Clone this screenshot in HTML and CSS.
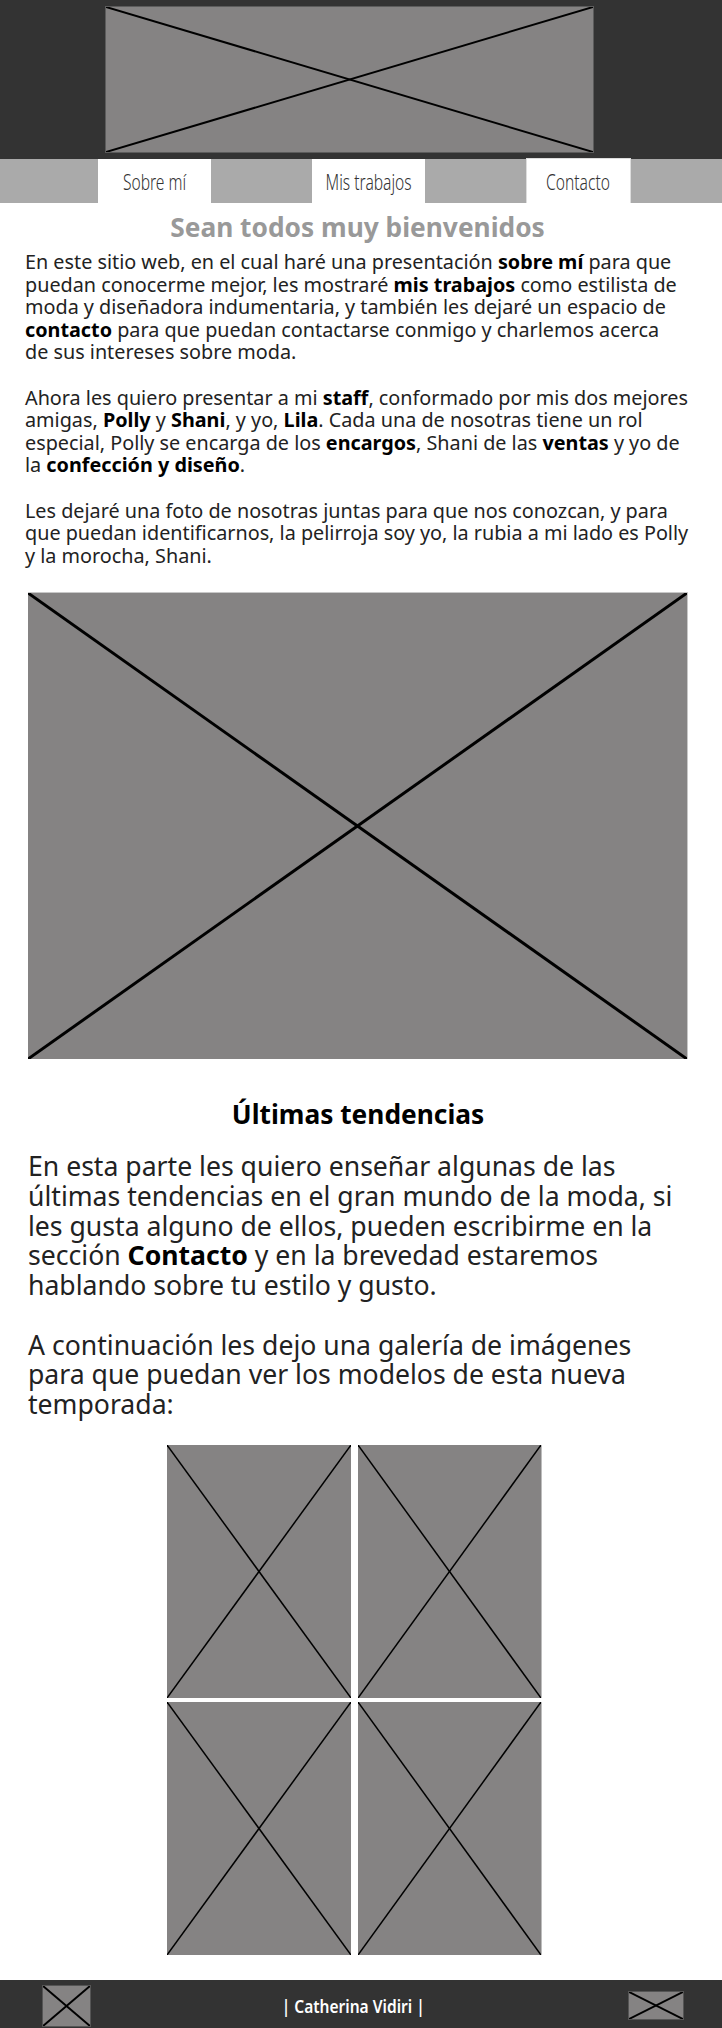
FILE: index.html
```html
<!DOCTYPE html>
<html lang="es">
  <head>
    <meta charset="UTF-8" />
    <meta name="viewport" content="width=device-width, initial-scale=1.0" />
    <title>Catherina Vidiri</title>

    <link rel="stylesheet" href="styles.css">
  </head>
  <body>
    <header class="top">
      <svg class="ph logo" viewBox="0 0 100 100" preserveAspectRatio="none">
        <rect width="100" height="100" />
        <line x1="0" y1="0" x2="100" y2="100" />
        <line x1="100" y1="0" x2="0" y2="100" />
      </svg>
    </header>

    <nav class="menu">
      <a href="#sobre-mi" class="menu-item"><span>Sobre mí</span></a>
      <a href="#trabajos" class="menu-item"><span>Mis trabajos</span></a>
      <a href="#contacto" class="menu-item contacto"><span>Contacto</span></a>
    </nav>

    <section class="intro" id="sobre-mi">
      <h1>Sean todos muy bienvenidos</h1>
      <p class="lead">
        En este sitio web, en el cual haré una presentación <b>sobre mí</b> para que
        puedan conocerme mejor, les mostraré <b>mis trabajos</b> como estilista de
        moda y diseñadora indumentaria, y también les dejaré un espacio de
        <b>contacto</b> para que puedan contactarse conmigo y charlemos acerca
        de sus intereses sobre moda.
      </p>
      <p>
        Ahora les quiero presentar a mi <b>staff</b>, conformado por mis dos mejores
        amigas, <b>Polly</b> y <b>Shani</b>, y yo, <b>Lila</b>. Cada una de nosotras tiene un rol
        especial, Polly se encarga de los <b>encargos</b>, Shani de las <b>ventas</b> y yo de
        la <b>confección y diseño</b>.
      </p>
      <p>
        Les dejaré una foto de nosotras juntas para que nos conozcan, y para
        que puedan identificarnos, la pelirroja soy yo, la rubia a mi lado es Polly
        y la morocha, Shani.
      </p>
    </section>

    <svg class="ph photo" viewBox="0 0 100 100" preserveAspectRatio="none">
      <rect width="100" height="100" />
      <line x1="0" y1="0" x2="100" y2="100" />
      <line x1="100" y1="0" x2="0" y2="100" />
    </svg>

    <section class="trends" id="trabajos">
      <h2>Últimas tendencias</h2>
      <p>
        En esta parte les quiero enseñar algunas de las
        últimas tendencias en el gran mundo de la moda, si
        les gusta alguno de ellos, pueden escribirme en la
        sección <b>Contacto</b> y en la brevedad estaremos
        hablando sobre tu estilo y gusto.
      </p>
      <p>
        A continuación les dejo una galería de imágenes
        para que puedan ver los modelos de esta nueva
        temporada:
      </p>

      <div class="gallery">
        <svg class="ph" viewBox="0 0 100 100" preserveAspectRatio="none">
          <rect width="100" height="100" />
          <line x1="0" y1="0" x2="100" y2="100" />
          <line x1="100" y1="0" x2="0" y2="100" />
        </svg>
        <svg class="ph" viewBox="0 0 100 100" preserveAspectRatio="none">
          <rect width="100" height="100" />
          <line x1="0" y1="0" x2="100" y2="100" />
          <line x1="100" y1="0" x2="0" y2="100" />
        </svg>
        <svg class="ph" viewBox="0 0 100 100" preserveAspectRatio="none">
          <rect width="100" height="100" />
          <line x1="0" y1="0" x2="100" y2="100" />
          <line x1="100" y1="0" x2="0" y2="100" />
        </svg>
        <svg class="ph" viewBox="0 0 100 100" preserveAspectRatio="none">
          <rect width="100" height="100" />
          <line x1="0" y1="0" x2="100" y2="100" />
          <line x1="100" y1="0" x2="0" y2="100" />
        </svg>
      </div>
    </section>

    <footer class="bottom" id="contacto">
      <svg class="ph icon-left" viewBox="0 0 100 100" preserveAspectRatio="none">
        <rect width="100" height="100" />
        <line x1="0" y1="0" x2="100" y2="100" />
        <line x1="100" y1="0" x2="0" y2="100" />
      </svg>
      <span class="firma">| Catherina Vidiri |</span>
      <svg class="ph icon-right" viewBox="0 0 100 100" preserveAspectRatio="none">
        <rect width="100" height="100" />
        <line x1="0" y1="0" x2="100" y2="100" />
        <line x1="100" y1="0" x2="0" y2="100" />
      </svg>
    </footer>
  </body>
</html>
```

FILE: styles.css
```css
body {
  margin: 0;
  padding: 0;
  font-family: "Noto Sans", "Open Sans", sans-serif;
  color: #222;
  background-color: #fff;
}

b {
  color: #000;
}

/* placeholders de imagen */
.ph {
  display: block;
  box-sizing: border-box;
}

.ph rect {
  fill: #858383;
}

.ph line {
  stroke: #000;
  stroke-width: 1.5;
  vector-effect: non-scaling-stroke;
}

.top {
  background-color: #333;
  height: 159px;
  padding-top: 6px;
  box-sizing: border-box;
}

.logo {
  width: 489px;
  height: 147px;
  margin-left: 105px;
  border: 1px solid #5c5c5c;
}

.logo line {
  stroke-width: 2;
}

.menu {
  background-color: #aaa;
  height: 44px;
  display: flex;
  gap: 101px;
  padding-left: 98px;
}

.menu-item {
  width: 113px;
  display: flex;
  align-items: center;
  justify-content: center;
  background: #fff;
  color: #333;
  text-decoration: none;
}

/* letra angosta */
.menu-item span {
  display: inline-block;
  white-space: nowrap;
  font-size: 22px;
  font-weight: 300;
  transform: scaleX(0.71);
}

.contacto {
  width: 105px;
  margin-top: -1px;
  border: 1px solid #ddd;
  border-bottom: none;
  box-sizing: border-box;
}

.intro {
  padding: 0 32px 0 25px;
}

.intro h1 {
  font-size: 26.3px;
  line-height: 30px;
  color: #999;
  text-align: center;
  margin: 9px 0 9px;
}

.intro p {
  font-size: 19.8px;
  line-height: 22.6px;
  margin: 0 0 22.6px;
}

.intro .lead {
  padding-right: 7px;
}

.photo {
  width: 660px;
  height: 467px;
  margin: 25px 0 0 28px;
  border-top: 1px solid #c8c8c8;
  border-right: 1px solid #c8c8c8;
}

.photo line {
  stroke-width: 3;
}

.trends {
  padding: 0 34px 0 28px;
}

.trends h2 {
  font-size: 26.3px;
  line-height: 30px;
  text-align: center;
  color: #000;
  margin: 40px 0 23px;
}

.trends p {
  font-size: 26.6px;
  line-height: 29.7px;
  margin: 0;
}

.trends p + p {
  margin-top: 29.7px;
}

.gallery {
  display: grid;
  grid-template-columns: 184px 184px;
  grid-auto-rows: 253px;
  column-gap: 7px;
  row-gap: 4px;
  margin: 25px 0 0 139px;
}

.gallery .ph {
  width: 100%;
  height: 100%;
}

.gallery .ph:nth-child(even) {
  border-right: 1px solid #bdbdbd;
}

.bottom {
  background-color: #333;
  margin-top: 25px;
  display: flex;
  align-items: center;
  justify-content: space-between;
  padding: 5px 38px 5px 42px;
}

.icon-left {
  width: 49px;
  height: 42px;
  border: 1px solid #555;
}

.icon-right {
  width: 56px;
  height: 29px;
  border: 1px solid #555;
}

.bottom line {
  stroke-width: 2;
}

.firma {
  display: inline-block;
  white-space: nowrap;
  color: #fff;
  font-weight: 600;
  font-size: 18.5px;
  transform: scaleX(0.84);
  margin-right: 13px;
}
```
